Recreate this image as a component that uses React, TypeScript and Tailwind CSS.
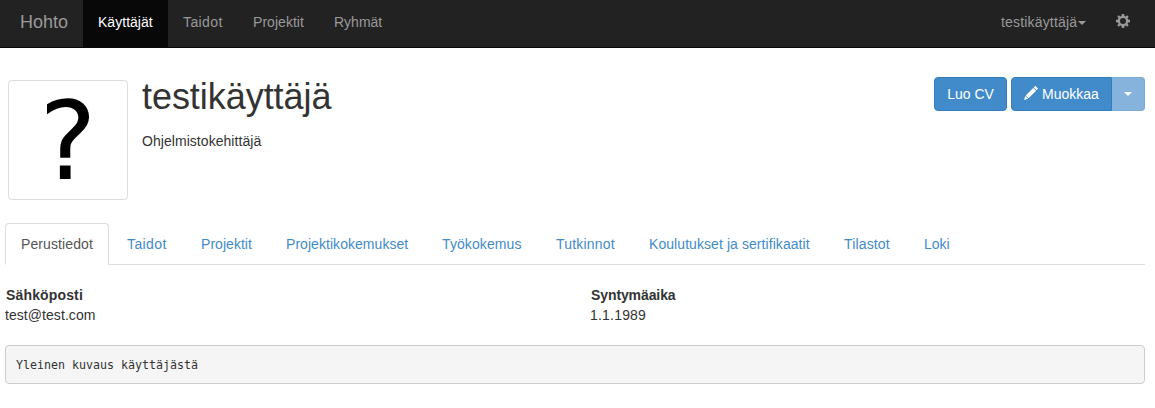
const navItems = [
  { label: 'Käyttäjät', style: 'w-[85px] bg-[#080808] text-white tracking-[0.03px]' },
  { label: 'Taidot', style: 'w-[70px] tracking-[0.4px]' },
  { label: 'Projektit', style: 'w-[81px] tracking-[0.04px]' },
  { label: 'Ryhmät', style: 'w-[78px]' },
];
const tabs = [
  { label: 'Perustiedot', style: 'w-[104px] tracking-[0.1px]' },
  { label: 'Taidot', style: 'w-[72px] tracking-[0.4px]' },
  { label: 'Projektit', style: 'w-[83px] tracking-[0.04px]' },
  { label: 'Projektikokemukset', style: 'w-[154px] tracking-[0.05px]' },
  { label: 'Työkokemus', style: 'w-[112px] tracking-[0.1px]' },
  { label: 'Tutkinnot', style: 'w-[91px] tracking-[0.2px]' },
  { label: 'Koulutukset ja sertifikaatit', style: 'w-[193px] tracking-[0.07px]' },
  { label: 'Tilastot', style: 'w-[78px] tracking-[0.15px]' },
  { label: 'Loki', style: 'w-[58px]' },
];

function Caret() {
  return (
    <svg width="8" height="4" viewBox="0 0 8 4" fill="currentColor" aria-hidden="true">
      <path d="M0 0h8L4 4z" />
    </svg>
  );
}

function Cog() {
  return (
    <svg width="14" height="14" viewBox="0 0 14 14" fill="currentColor" aria-hidden="true">
      <path
        fillRule="evenodd"
        d="M5.800 0h2.400l.3 2 1.200.5 1.600-1.200 1.400 1.400-1.200 1.600.5 1.200 2 .3v2.400l-2 .3-.5 1.200 1.200 1.600-1.400 1.400-1.600-1.200-1.200.5-.3 2H5.800l-.3-2-1.200-.5-1.600 1.200-1.400-1.400 1.200-1.600L2 8.500l-2-.3V5.800l2-.3.5-1.200-1.200-1.600 1.400-1.400 1.600 1.200L5.500 2zM7 4a3 3 0 1 0 0 6 3 3 0 0 0 0-6z"
      />
    </svg>
  );
}

function Pencil() {
  return (
    <svg width="14" height="14" viewBox="0 0 14 14" fill="currentColor" aria-hidden="true">
      <path d="M0 14l1.300-4.100 2.800 2.800zM1.700 9.400l7.500-7.500 2.900 2.900-7.500 7.500zM9.700 1.400L10.800.3q.5-.5 1 0l1.900 1.900q.5.5 0 1l-1.100 1.100z" />
    </svg>
  );
}

export default function App() {
  return (
    <div className="h-[408px] overflow-hidden bg-white font-['Liberation_Sans',Arial,sans-serif] text-sm leading-5 text-[#333]">
      <nav className="flex h-12 border-b border-[#080808] bg-[#222] text-[#999]">
        <a className="w-[83px] pt-3 pl-5 text-lg leading-5">Hohto</a>
        {navItems.map((item) => (
          <a key={item.label} className={`${item.style} shrink-0 pt-3 pl-[15px]`}>
            {item.label}
          </a>
        ))}
        <div className="ml-auto flex pr-[25px]">
          <a className="flex w-[115px] pt-3">
            <span className="w-[77px] tracking-[0.17px]">testikäyttäjä</span>
            <span className="pt-[9px]"><Caret /></span>
          </a>
          <a className="pt-[14px]"><Cog /></a>
        </div>
      </nav>

      <main className="pr-2.5 pl-[5px]">
        <header className="flex h-[175px] items-start">
          <div className="mt-8 ml-[3px] flex h-[120px] w-[120px] items-center justify-center rounded border border-[#ddd] pt-[3px] font-['DejaVu_Sans',sans-serif] text-[108px] leading-[118px] text-black">
            ?
          </div>
          <div className="pl-3.5">
            <h1 className="mt-[29px] text-[36px] leading-10 tracking-[-0.05px]">testikäyttäjä</h1>
            <p className="mt-[14px] tracking-[0.05px]">Ohjelmistokehittäjä</p>
          </div>
          <div className="mt-[29px] ml-auto flex text-white">
            <button className="mr-1 h-[34px] w-[73px] rounded border border-[#357ebd] bg-[#428bca]">Luo CV</button>
            <button className="flex h-[34px] w-[101px] items-center rounded-l border border-[#357ebd] bg-[#428bca] pl-3">
              <span className="-mt-0.5 mr-1"><Pencil /></span>
              Muokkaa
            </button>
            <button className="flex h-[34px] w-[33px] items-center justify-center rounded-r border border-l-0 border-[#7aabd5] bg-[#86b3dc]">
              <Caret />
            </button>
          </div>
        </header>

        <div className="flex h-[42px] border-b border-[#ddd]">
          {tabs.map((tab, i) => (
            <a
              key={tab.label}
              className={`${tab.style} h-[42px] shrink-0 border pt-[10px] whitespace-nowrap ${
                i === 0
                  ? 'mr-[3px] rounded-t border-[#ddd] border-b-white bg-white pl-[15px] text-[#555]'
                  : 'mr-0.5 border-transparent pl-[14px] text-[#428bca]'
              }`}
            >
              {tab.label}
            </a>
          ))}
        </div>

        <dl className="mt-5 flex">
          <div className="w-[585px]">
            <dt className="pl-px font-bold tracking-[0.15px]">Sähköposti</dt>
            <dd className="tracking-[0.06px]">test@test.com</dd>
          </div>
          <div>
            <dt className="pl-px font-bold tracking-[-0.1px]">Syntymäaika</dt>
            <dd className="tracking-[0.2px]">1.1.1989</dd>
          </div>
        </dl>

        <pre className="mt-5 h-[39px] rounded border border-[#ccc] bg-[#f5f5f5] px-2.5 pt-[9px] font-['DejaVu_Sans_Mono',monospace] text-[11.63px] leading-5">
          Yleinen kuvaus käyttäjästä
        </pre>
      </main>
    </div>
  );
}
